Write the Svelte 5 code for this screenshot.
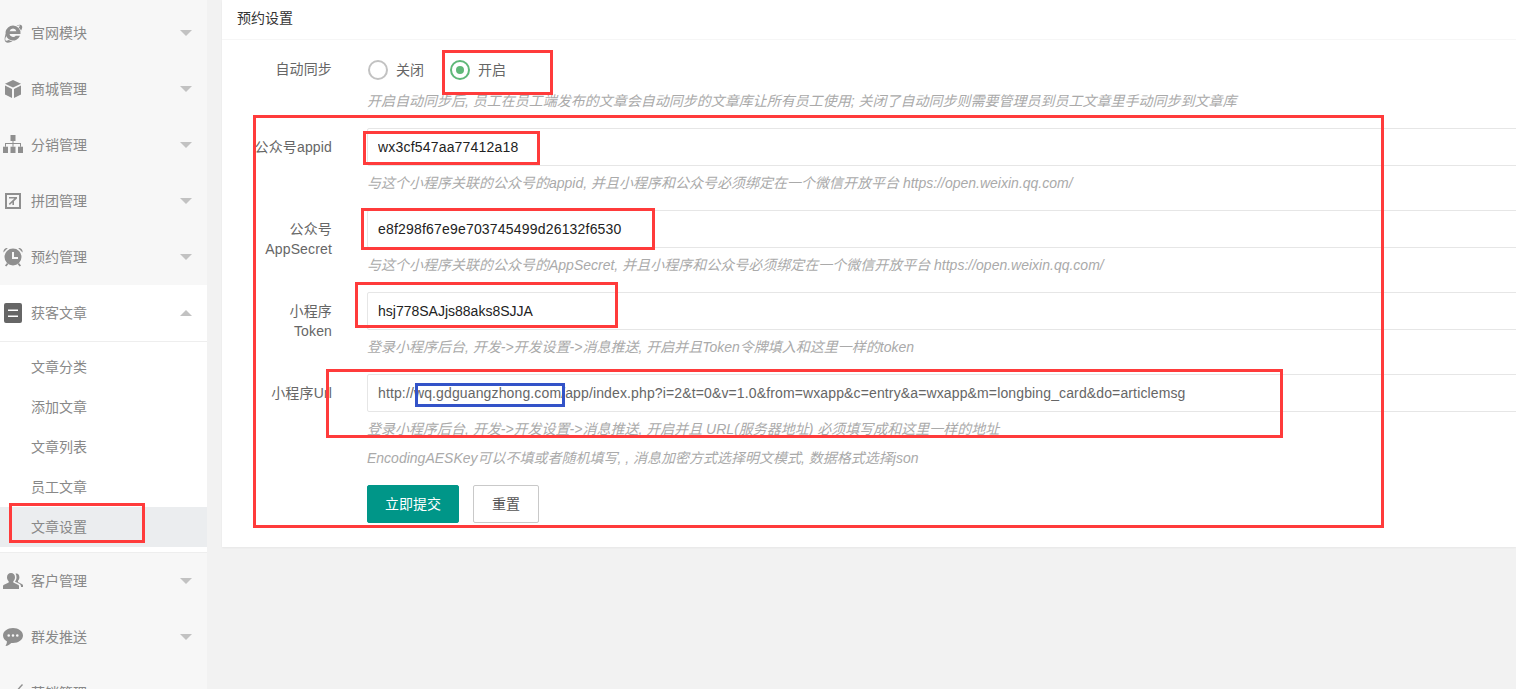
<script lang="ts">
	const menuTop = [
		{ name: '官网模块', icon: 'ie' },
		{ name: '商城管理', icon: 'cube' },
		{ name: '分销管理', icon: 'sitemap' },
		{ name: '拼团管理', icon: 'share' },
		{ name: '预约管理', icon: 'clock' }
	];
	const menuBottom = [
		{ name: '客户管理', icon: 'users' },
		{ name: '群发推送', icon: 'chat' },
		{ name: '营销管理', icon: 'pen' }
	];
	const subItems = ['文章分类', '添加文章', '文章列表', '员工文章', '文章设置'];

	// 24px boxes, one unit is one pixel on screen
	const icons: Record<string, string[]> = {
		ie: [
			'M12 4.5a7.5 7.5 0 1 0 7 10.2h-4.2a3.6 3.6 0 0 1-6.3-1.700h11a7.5 7.5 0 0 0-7.5-8.500zM8.600 10.200a3.500 3.500 0 0 1 6.800 0H8.600z',
			'M6.200 10.500C3.500 14.500 3 19 4.500 20.800c1.500 1.500 4.500.9 7-.6-1.500-.1-2.800-.5-3.800-1.100-1.500.7-2.600.8-3.100.3-.7-.8-.3-3 1.500-5.900z',
			'M15.500 5.100c2.200-1.300 4.200-1.700 5.200-.7 1 1 .6 3-.6 5.200-.6-1.300-1.400-2.400-2.400-3.200 1-1 1.200-1.800.9-2.100-.3-.3-1 0-1.900.6z'
		],
		cube: ['M12 3l8 3.800-8 3.800-8-3.800z', 'M4 8.500l7 3.500v9l-7-3.500z', 'M20 8.500L13 12v9l7-3.500z'],
		sitemap: [
			'M9.500 2h5v6h-2v2h7.500v3.700h-1v-2.700h-6.500v2.700h-1v-2.700H5v2.700H4v-3.700h7.500V8h-2z',
			'M2 13.700h5V20H2z',
			'M9.500 13.700h5V20h-5z',
			'M17 13.700h5V20h-5z'
		],
		share: ['M4 4h16v16H4zM6 6v12h12V6zM8 8h8v1.600l-3 2.700V16h-1.600v-2.400L8.800 16 7.800 14.800l5.600-5.200H8z'],
		clock: [
			'M12 3.500a8.500 8.500 0 1 0 0 17 8.500 8.500 0 0 0 0-17zM11 7h2v5h4v2h-6z',
			'M2.500 7.500C2 5 4 2.800 6.800 3z',
			'M21.500 7.500C22 5 20 2.800 17.200 3z',
			'M6 18l-2 2.500 1.300 1 2.200-2.500z',
			'M18 18l2 2.500-1.300 1-2.200-2.500z'
		],
		users: [
			'M10 4c-2.500 0-4 1.900-4 4.300 0 1.700.7 3.100 1.700 3.900v1.300L3 15.800c-.7.300-1 .8-1 1.500V20h16v-2.700c0-.7-.3-1.200-1-1.500l-4.700-2.300v-1.300c1-.8 1.700-2.200 1.700-3.900C14 5.900 12.500 4 10 4z',
			'M15.500 4.500c-.3 0-.7 0-1 .1.700 1 1 2.300 1 3.600 0 1.600-.5 3-1.400 4.100v.4l3.900 1.900c1.200.6 2 1.600 2 2.900V18h2v-1.500c0-.6-.3-1-.8-1.300L17 13v-1.200c.9-.8 1.400-2 1.400-3.500 0-2.200-1.200-3.800-2.900-3.800z'
		],
		chat: [
			'M12 3C6.500 3 2 6.400 2 10.500c0 2.500 1.600 4.600 4 6-.1 1.600-.6 3.200-1.500 4.500 2.300-.4 4.300-1.600 5.800-3.100.6.100 1.100.1 1.700.1 5.500 0 10-3.400 10-7.500S17.500 3 12 3zM7.700 9.200a1.300 1.300 0 1 0 0 2.600 1.300 1.300 0 0 0 0-2.600zM12 9.200a1.300 1.300 0 1 0 0 2.600 1.300 1.300 0 0 0 0-2.600zM16.300 9.200a1.300 1.300 0 1 0 0 2.600 1.300 1.300 0 0 0 0-2.600z'
		],
		pen: ['M21 3c-3 3-7 8-10 13l-4-4-1.500 1.500L11 20c2-5 6-11 11-16z'],
		doc: ['M5 2h14a2 2 0 0 1 2 2v16a2 2 0 0 1-2 2H5a2 2 0 0 1-2-2V4a2 2 0 0 1 2-2zM7 8.500V10h10V8.500zM7 14.500V16h10v-1.500z']
	};

	const rows = [
		{ label: ['公众号appid'], value: 'wx3cf547aa77412a18', dark: true, tight: false, help: ['与这个小程序关联的公众号的appid, 并且小程序和公众号必须绑定在一个微信开放平台 https://open.weixin.qq.com/'] },
		{ label: ['公众号', 'AppSecret'], value: 'e8f298f67e9e703745499d26132f6530', dark: true, tight: false, help: ['与这个小程序关联的公众号的AppSecret, 并且小程序和公众号必须绑定在一个微信开放平台 https://open.weixin.qq.com/'] },
		{ label: ['小程序', 'Token'], value: 'hsj778SAJjs88aks8SJJA', dark: true, tight: true, help: ['登录小程序后台, 开发->开发设置->消息推送, 开启并且Token令牌填入和这里一样的token'] },
		{
			label: ['小程序Url'],
			value: 'http://wq.gdguangzhong.com/app/index.php?i=2&t=0&v=1.0&from=wxapp&c=entry&a=wxapp&m=longbing_card&do=articlemsg',
			dark: false,
			tight: false,
			help: ['登录小程序后台, 开发->开发设置->消息推送, 开启并且 URL(服务器地址) 必须填写成和这里一样的地址', 'EncodingAESKey可以不填或者随机填写, , 消息加密方式选择明文模式, 数据格式选择json']
		}
	];
</script>

{#snippet menuRow(item: { name: string; icon: string }, open = false)}
	<div class="menu-row" class:open>
		<svg class="icon" class:doc={item.icon === 'doc'} viewBox="0 0 24 24" aria-hidden="true">
			{#each icons[item.icon] as d}<path {d} fill-rule="evenodd" />{/each}
		</svg>
		<span>{item.name}</span>
		<i class="caret"></i>
	</div>
{/snippet}

<div class="page">
	<aside class="side">
		{#each menuTop as item}
			{@render menuRow(item)}
		{/each}
		<div class="group">
			{@render menuRow({ name: '获客文章', icon: 'doc' }, true)}
			<div class="sub">
				{#each subItems as sub, i}
					<div class="sub-row" class:active={i === subItems.length - 1}>{sub}</div>
				{/each}
			</div>
		</div>
		{#each menuBottom as item}
			{@render menuRow(item)}
		{/each}
	</aside>

	<main class="content">
		<section class="card">
			<header class="card-head">预约设置</header>
			<form class="form" onsubmit={(e) => e.preventDefault()}>
				<div class="row first">
					<div class="label"><span>自动同步</span></div>
					<div class="field">
						<div class="radios">
							<span class="radio"><i class="ring"></i>关闭</span>
							<span class="radio on"><i class="ring"></i>开启</span>
						</div>
						<p class="help">开启自动同步后, 员工在员工端发布的文章会自动同步的文章库让所有员工使用; 关闭了自动同步则需要管理员到员工文章里手动同步到文章库</p>
					</div>
				</div>
				{#each rows as row}
					<div class="row">
						<div class="label">
							{#each row.label as line}<span>{line}</span>{/each}
						</div>
						<div class="field">
							<input class="text" class:dark={row.dark} class:tight={row.tight} type="text" value={row.value} />
							{#each row.help as text}
								<p class="help">{text}</p>
							{/each}
						</div>
					</div>
				{/each}
				<div class="row actions">
					<div class="label"></div>
					<div class="buttons">
						<button class="btn primary" type="submit">立即提交</button>
						<button class="btn" type="button">重置</button>
					</div>
				</div>
			</form>
		</section>
	</main>

	<!-- hand-drawn annotation boxes on top of the screenshot -->
	<div class="mark m-side"></div>
	<div class="mark m-open"></div>
	<div class="mark m-all"></div>
	<div class="mark m-appid"></div>
	<div class="mark m-secret"></div>
	<div class="mark m-token"></div>
	<div class="mark m-url"></div>
	<div class="mark blue m-domain"></div>
</div>

<style>
	:global(body) { margin: 0; background: #f2f2f2; }
	.page {
		position: relative;
		display: flex;
		height: 689px;
		overflow: hidden;
		font: 14px/20px "Liberation Sans", "Noto Sans CJK SC", sans-serif;
		color: #666;
	}

	.side { width: 207px; flex: none; padding-top: 5px; background: #f7f7f7; color: #888; box-sizing: border-box; }
	.menu-row { display: flex; align-items: center; height: 56px; padding-left: 31px; position: relative; box-sizing: border-box; }
	.icon { position: absolute; left: 1px; top: 50%; width: 24px; height: 24px; margin-top: -12px; fill: #8f8f8f; }
	.icon.doc { fill: #666; }
	.caret { position: absolute; left: 180px; top: 25px; border: 6px solid transparent; border-top-color: #c2c2c2; border-bottom-width: 0; }
	.menu-row.open .caret { border-top-width: 0; border-bottom: 6px solid #c2c2c2; }
	.group { background: #fff; height: 267px; border-bottom: 1px solid #eee; box-sizing: content-box; }
	.group .menu-row { border-bottom: 1px solid #eee; height: 57px; }
	.sub { padding-top: 5px; }
	.sub-row { height: 40px; line-height: 40px; padding-left: 31px; }
	.sub-row.active { background: #ebedef; }

	.content { flex: 1; min-width: 0; padding-left: 15px; }
	.card { background: #fff; box-shadow: 0 1px 2px rgba(0, 0, 0, 0.05); overflow: hidden; }
	.card-head { height: 39px; line-height: 37px; padding-left: 15px; border-bottom: 1px solid #f6f6f6; color: #333; }
	.form { padding: 10px 0 24px; }
	.row { display: flex; margin-bottom: 17px; }
	.row.actions { margin-bottom: 0; }
	.label { width: 110px; flex: none; padding-top: 9px; margin-right: 35px; display: flex; flex-direction: column; align-items: flex-end; white-space: nowrap; letter-spacing: 0.15px; }
	.field { flex: 1; min-width: 0; margin-right: -2px; }
	.help { margin: 7px 0 0; font-size: 14px; line-height: 20px; font-style: italic; color: #aaa; white-space: nowrap; }
	.help + .help { margin-top: 9px; }
	.first .help { margin-top: 3px; }

	.radios { display: flex; height: 38px; box-sizing: border-box; padding: 2px 0 0 1px; align-items: center; }
	.radio { display: flex; align-items: center; margin-right: 26px; color: #666; }
	.ring { width: 20px; height: 20px; box-sizing: border-box; border: 2px solid #c2c2c2; border-radius: 50%; margin-right: 8px; position: relative; }
	.on .ring { border-color: #5fb878; }
	.on .ring::after { content: ""; position: absolute; left: 4px; top: 4px; width: 8px; height: 8px; background: #5fb878; border-radius: 50%; }

	.text { display: block; width: 100%; height: 38px; box-sizing: border-box; padding: 0 10px; border: 1px solid #e6e6e6; border-radius: 2px; font: inherit; letter-spacing: 0.13px; color: #666; background: #fff; outline: none; }
	.text.dark { color: #222; letter-spacing: 0.19px; }
	.text.tight { letter-spacing: 0; }

	.buttons { display: flex; gap: 14px; }
	.btn { height: 38px; padding: 0 18px; border: 1px solid #c9c9c9; border-radius: 2px; background: #fff; color: #555; font: inherit; cursor: pointer; }
	.btn.primary { padding: 0 17px; background: #009688; border-color: #009688; color: #fff; }

	.mark { position: absolute; box-sizing: border-box; border: 3px solid #ff3b3b; pointer-events: none; }
	.mark.blue { border-color: #3353c8; }
	.m-side { left: 9px; top: 503px; width: 136px; height: 40px; }
	.m-open { left: 442px; top: 50px; width: 111px; height: 45px; }
	.m-all { left: 253px; top: 115px; width: 1131px; height: 413px; }
	.m-appid { left: 363px; top: 131px; width: 177px; height: 34px; }
	.m-secret { left: 361px; top: 208px; width: 294px; height: 42px; }
	.m-token { left: 355px; top: 282px; width: 263px; height: 46px; }
	.m-url { left: 326px; top: 369px; width: 957px; height: 69px; }
	.m-domain { left: 415px; top: 383px; width: 150px; height: 24px; }
</style>
